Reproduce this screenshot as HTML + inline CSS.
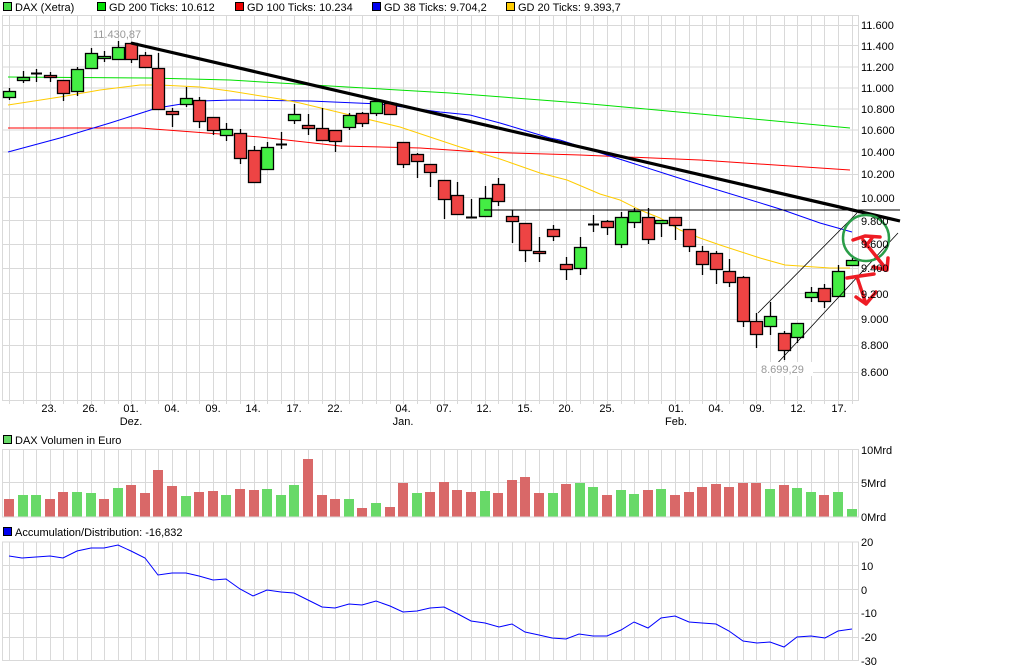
<!DOCTYPE html>
<html><head><meta charset="utf-8"><style>
body{margin:0;background:#fff;width:1009px;height:670px;overflow:hidden}
svg{display:block;font-family:"Liberation Sans",sans-serif;font-size:11px}
</style></head><body>
<svg id="s" width="1009" height="670" xmlns="http://www.w3.org/2000/svg">
<g id="grid"></g>
<g id="ma" fill="none" stroke-width="1">
<polyline stroke="#00e000" points="8,77 150,78 230,80 330,86 450,93 580,103 700,114 850,128"/>
<polyline stroke="#ff0000" points="8,128 140,128 180,131 260,137 340,146 420,148 480,152 580,155 700,160 850,170"/>
<polyline stroke="#0000ff" points="8,152 60,138 110,123 157,108 200,101 233,100 310,101 380,104 440,112 470,115 500,123 550,138 560,140 685,180 767,205 783,210 820,223 852,232"/>
<polyline stroke="#ffcc00" points="8,105 60,97 100,90 140,85 160,85 200,87 230,91 280,99 300,103 350,115 400,127 460,147 500,159 540,173 567,180 600,194 620,200 640,210 660,218 680,230 700,238 720,245 760,258 785,265 830,268 850,268"/>
</g>
<g id="cdl"></g>
<g stroke="#000" fill="none">
<line x1="131" y1="43" x2="900" y2="221" stroke-width="3.2"/>
<line x1="484" y1="210" x2="900" y2="210" stroke-width="1"/>
<line x1="758" y1="313" x2="857" y2="213" stroke-width="0.8"/>
<line x1="773" y1="368" x2="898" y2="233" stroke-width="0.8"/>
</g>
<rect x="757" y="362" width="56" height="14" fill="#fff"/>
<text x="93" y="38" fill="#999">11.430,87</text>
<text x="761" y="373" fill="#999">8.699,29</text>
<g id="vol"></g>
<polyline id="ad" fill="none" stroke="#0000ff" stroke-width="1"/>
<circle cx="866" cy="238" r="23" fill="none" stroke="#2a9d48" stroke-width="2.5"/>
<g stroke="#ee1c24" stroke-width="3.5" fill="none" stroke-linecap="round" stroke-linejoin="round">
<path d="M853,240 L865,236 L880,237 M872,238 L866,246 M863,240 L887,270 L888,258 M887,270 L873,267"/>
<path d="M847,278 L860,276 L874,274 M857,277 L866,304 L856,297 M866,304 L876,292"/>
</g>
<g stroke="#000" stroke-width="1">
<rect x="3.5" y="2.5" width="8" height="8" fill="#44dd44"/>
<rect x="97.5" y="2.5" width="8" height="8" fill="#00dd00"/>
<rect x="235.5" y="2.5" width="8" height="8" fill="#ee0000"/>
<rect x="372.5" y="2.5" width="8" height="8" fill="#0000ee"/>
<rect x="506.5" y="2.5" width="8" height="8" fill="#ffcc00"/>
<rect x="3.5" y="435.5" width="8" height="8" fill="#66d966"/>
<rect x="3.5" y="527.5" width="8" height="8" fill="#0000ee"/>
</g>
<g fill="#000">
<text x="15" y="11">DAX (Xetra)</text>
<text x="109" y="11">GD 200 Ticks: 10.612</text>
<text x="247" y="11">GD 100 Ticks: 10.234</text>
<text x="384" y="11">GD 38 Ticks: 9.704,2</text>
<text x="518" y="11">GD 20 Ticks: 9.393,7</text>
<text x="15" y="444">DAX Volumen in Euro</text>
<text x="15" y="536">Accumulation/Distribution: -16,832</text>
</g>
<g fill="#000">
<text x="861" y="29">11.600</text><text x="861" y="50">11.400</text><text x="861" y="71">11.200</text>
<text x="861" y="92">11.000</text><text x="861" y="113">10.800</text><text x="861" y="134">10.600</text>
<text x="861" y="156">10.400</text><text x="861" y="178">10.200</text><text x="861" y="202">10.000</text>
<text x="861" y="225">9.800</text><text x="861" y="248">9.600</text><text x="861" y="272">9.400</text>
<text x="861" y="298">9.200</text><text x="861" y="323">9.000</text><text x="861" y="349">8.800</text>
<text x="861" y="376">8.600</text>
<text x="861" y="454">10Mrd</text><text x="861" y="487">5Mrd</text><text x="861" y="521">0Mrd</text>
<text x="861" y="546">20</text><text x="861" y="570">10</text><text x="861" y="594">0</text>
<text x="861" y="617">-10</text><text x="861" y="641">-20</text><text x="861" y="665">-30</text>
</g>
<g fill="#000" text-anchor="middle">
<text x="49" y="412">23.</text><text x="90" y="412">26.</text><text x="131" y="412">01.</text>
<text x="172" y="412">04.</text><text x="213" y="412">09.</text><text x="253" y="412">14.</text>
<text x="294" y="412">17.</text><text x="335" y="412">22.</text><text x="403" y="412">04.</text>
<text x="444" y="412">07.</text><text x="484" y="412">12.</text><text x="525" y="412">15.</text>
<text x="566" y="412">20.</text><text x="607" y="412">25.</text><text x="676" y="412">01.</text>
<text x="716" y="412">04.</text><text x="757" y="412">09.</text><text x="798" y="412">12.</text>
<text x="839" y="412">17.</text>
<text x="131" y="425">Dez.</text><text x="403" y="425">Jan.</text><text x="676" y="425">Feb.</text>
</g>
</svg>
<script>
var NS="http://www.w3.org/2000/svg";
function el(p,t,a){var e=document.createElementNS(NS,t);for(var k in a)e.setAttribute(k,a[k]);p.appendChild(e);return e}
var g=document.getElementById("grid");
var X=function(k){return 9+13.59*k};
var hy=[25,45,66.5,87.5,108.5,129.5,151.5,174,197,220,244,268,293,319,345,372];
var gc="#d9d9d9";
[[15,400],[449,516.5],[541.5,660]].forEach(function(p){
 el(g,"line",{x1:2,y1:p[0]+.5,x2:859,y2:p[0]+.5,stroke:gc});
 el(g,"line",{x1:2,y1:p[1]+.5,x2:859,y2:p[1]+.5,stroke:gc});
 el(g,"line",{x1:858.5,y1:p[0],x2:858.5,y2:p[1],stroke:gc});
 el(g,"line",{x1:2.5,y1:p[0],x2:2.5,y2:p[1],stroke:gc});
 for(var k=0;k<63;k++){var x=Math.round(X(k))+.5;el(g,"line",{x1:x,y1:p[0],x2:x,y2:p[1]+(p[0]==15?4:0),stroke:gc});}
});
hy.forEach(function(y){el(g,"line",{x1:2,y1:y+.5,x2:859,y2:y+.5,stroke:gc})});
[482.5].forEach(function(y){el(g,"line",{x1:2,y1:y,x2:859,y2:y,stroke:gc})});
[565.5,589.5,613.5,637.5].forEach(function(y){el(g,"line",{x1:2,y1:y,x2:859,y2:y,stroke:gc})});
var C=[[91,97,88,100,"g"],[77,80,71,83,"g"],[73,73,69,82,"d"],[75,77,72,82,"r"],[80,93,80,101,"r"],[69,91,67,96,"g"],[53,68,48,68,"g"],[56,58,51,62,"g"],[47,59,41,60,"g"],[43,59,42,63,"r"],
[55,67,52,67,"r"],[68,109,53,109,"r"],[111,114,108,127,"r"],[98,104,87,107,"g"],[100,121,97,128,"r"],[117,130,117,135,"r"],[129,135,123,141,"g"],[133,158,129,164,"r"],[150,182,146,183,"r"],[147,169,142,169,"g"],
[144,144,132,149,"d"],[114,120,104,124,"g"],[125,128,114,135,"r"],[128,140,108,140,"r"],[130,141,130,152,"r"],[115,127,113,130,"g"],[113,123,112,127,"r"],[101,113,100,116,"g"],[103,114,103,114,"r"],[142,164,142,168,"r"],
[154,161,153,178,"r"],[164,172,164,187,"r"],[180,199,180,219,"r"],[195,214,182,214,"r"],[217,217,199,217,"d"],[198,216,186,216,"g"],[184,201,178,206,"r"],[216,221,210,243,"r"],[223,250,223,262,"r"],[251,253,237,262,"r"],
[229,236,225,241,"r"],[264,269,257,280,"r"],[247,268,237,275,"g"],[224,224,215,232,"d"],[221,227,220,235,"r"],[217,244,212,248,"g"],[211,222,208,228,"g"],[217,239,208,244,"r"],[220,223,220,237,"g"],[217,225,217,240,"r"],
[229,246,229,252,"r"],[251,264,246,275,"r"],[253,269,251,284,"r"],[271,282,259,287,"r"],[277,321,276,327,"r"],[321,334,313,348,"r"],[316,326,302,335,"g"],[333,350,331,360,"r"],[323,337,323,343,"g"],[292,297,287,302,"g"],
[288,301,284,308,"r"],[271,296,265,296,"g"],[260,265,258,265,"g"]];
var cg=document.getElementById("cdl");
C.forEach(function(c,k){var x=Math.round(X(k));
 el(cg,"line",{x1:x+.5,y1:c[2],x2:x+.5,y2:c[3],stroke:"#000","stroke-width":1.3});
 if(c[4]=="d"){el(cg,"line",{x1:x-5,y1:c[0]+.5,x2:x+6,y2:c[0]+.5,stroke:"#000","stroke-width":2});}
 else{var h=Math.max(c[1]-c[0],2);el(cg,"rect",{x:x-5.5,y:c[0]+.5,width:12,height:h,fill:c[4]=="g"?"#44ee44":"#ee4444",stroke:"#000","stroke-width":1.3});}
});
var V=[[499,"r"],[495,"g"],[495,"g"],[499,"r"],[492,"r"],[492,"g"],[493,"g"],[499,"r"],[488,"g"],[485,"r"],[493,"r"],[470,"r"],[486,"r"],[496,"g"],[492,"r"],[491,"r"],[495,"g"],[489,"r"],[490,"r"],[489,"g"],
[495,"g"],[485,"g"],[459,"r"],[495,"r"],[499,"r"],[499,"g"],[508,"r"],[503,"g"],[507,"r"],[483,"r"],[493,"g"],[492,"r"],[482,"r"],[490,"r"],[492,"r"],[491,"g"],[493,"r"],[480,"r"],[477,"r"],[493,"r"],
[493,"g"],[484,"r"],[483,"g"],[487,"g"],[495,"r"],[490,"g"],[494,"g"],[490,"r"],[489,"g"],[495,"r"],[492,"r"],[487,"r"],[484,"r"],[487,"r"],[483,"r"],[483,"r"],[489,"g"],[485,"r"],[488,"g"],[492,"g"],
[495,"r"],[492,"g"],[509,"g"]];
var vg=document.getElementById("vol");
V.forEach(function(v,k){var x=Math.round(X(k));el(vg,"rect",{x:x-5,y:v[0],width:10,height:516.5-v[0],fill:v[1]=="g"?"#68d968":"#d96868"})});
document.getElementById("ad").setAttribute("points","9,556 22,558 36,557 50,556 63,558 77,551 91,548 104,548 118,545 131,551 145,558 158,575 172,573 186,573 199,576 213,580 226,579 240,589 253,596 267,590 281,592 294,593 308,600 322,607 335,608 349,604 362,605 376,601 390,606 403,612 417,611 430,608 444,607 458,614 471,621 485,623 499,627 512,624 525,632 539,635 552,638 566,639 579,634 593,636 607,636 621,630 634,622 648,628 661,618 675,616 689,622 702,623 716,624 729,631 743,641 757,643 770,642 784,647 797,637 811,636 825,638 838,631 852,629");
</script>
</body></html>
